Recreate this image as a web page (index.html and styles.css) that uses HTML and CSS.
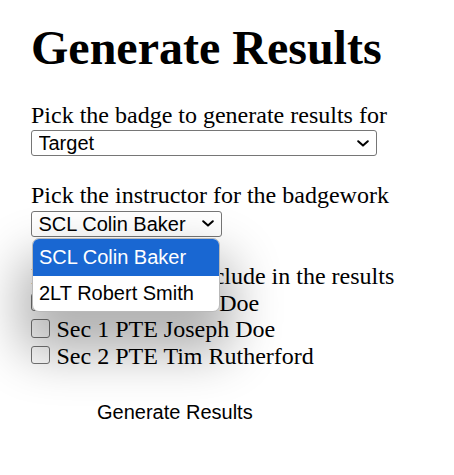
FILE: index.html
```html
<!DOCTYPE html>
<html lang="en">
<head>
<meta charset="utf-8">
<title>Generate Results</title>
<link rel="stylesheet" href="styles.css">
</head>
<body>
<div class="page">
  <h1 class="title">Generate Results</h1>
  <form class="form">
    <div class="field">
      <label class="label" for="badge">Pick the badge to generate results for</label>
      <div class="select-wrap select-wide">
        <select id="badge" class="select"><option>Target</option></select>
        <svg class="chevron" width="12" height="7" viewBox="0 0 12 7"><path d="M1.2 1.2 L6 5.6 L10.8 1.2" fill="none" stroke="#000" stroke-width="2" stroke-linecap="round" stroke-linejoin="round"/></svg>
      </div>
    </div>
    <div class="field">
      <label class="label" for="instructor">Pick the instructor for the badgework</label>
      <div class="select-wrap select-narrow">
        <select id="instructor" class="select"><option>SCL Colin Baker</option><option>2LT Robert Smith</option></select>
        <svg class="chevron" width="12" height="7" viewBox="0 0 12 7"><path d="M1.2 1.2 L6 5.6 L10.8 1.2" fill="none" stroke="#000" stroke-width="2" stroke-linecap="round" stroke-linejoin="round"/></svg>
        <ul class="dropdown">
          <li class="option option-selected">SCL Colin Baker</li>
          <li class="option">2LT Robert Smith</li>
        </ul>
      </div>
    </div>
    <div class="field">
      <div class="label">Pick the users to include in the results</div>
      <label class="cadet"><input type="checkbox" class="check">Sec 1 REC John Doe</label>
      <label class="cadet"><input type="checkbox" class="check">Sec 1 PTE Joseph Doe</label>
      <label class="cadet"><input type="checkbox" class="check">Sec 2 PTE Tim Rutherford</label>
    </div>
    <button type="button" class="submit">Generate Results</button>
  </form>
</div>
</body>
</html>
```
FILE: styles.css
```css
html, body {
  margin: 0;
  padding: 0;
  background: #fff;
}

.page {
  padding: 20px 0 0 31px;
  font-family: "Liberation Serif", "Times New Roman", serif;
  font-size: 24px;
  color: #000;
}

.title {
  margin: 0;
  font-size: 48px;
  line-height: 55px;
  font-weight: 700;
}

.form {
  margin-top: 26.6px;
  display: flex;
  flex-direction: column;
  align-items: flex-start;
  gap: 26.5px;
}

.field {
  display: flex;
  flex-direction: column;
  align-items: flex-start;
}

.label {
  display: block;
  line-height: 26.7px;
}

.select-wrap {
  display: grid;
  grid-template-columns: minmax(0, 1fr);
  position: relative;
  margin-top: 2px;
}

.select-wide { width: 346px; }
.select-narrow { width: 191px; }

.select {
  grid-area: 1 / 1;
  box-sizing: border-box;
  width: 100%;
  min-width: 0;
  appearance: none;
  -webkit-appearance: none;
  height: 25.5px;
  margin: 0;
  padding: 0 26px 0 6.5px;
  border: 1px solid #767676;
  border-radius: 3px;
  background: #fff;
  color: #000;
  font-family: "Liberation Sans", Arial, sans-serif;
  font-size: 20px;
}

.chevron {
  grid-area: 1 / 1;
  justify-self: end;
  align-self: center;
  margin-right: 8.5px;
  pointer-events: none;
}

.dropdown {
  position: absolute;
  top: calc(100% + 1.5px);
  left: 1px;
  width: 188px;
  box-sizing: border-box;
  margin: 0;
  padding: 0;
  list-style: none;
  background: #fff;
  border: 1px solid #b9b9b9;
  border-radius: 7px;
  overflow: hidden;
  box-shadow: 0 30px 50px 12px rgba(0, 0, 0, 0.3);
  z-index: 10;
  font-family: "Liberation Sans", Arial, sans-serif;
  font-size: 20px;
}

.option {
  height: 35.5px;
  line-height: 35.5px;
  padding-left: 6px;
  color: #000;
  white-space: nowrap;
}

.option-selected {
  background: #1967d2;
  color: #fff;
  height: 36.5px;
  line-height: 36.5px;
}

.cadet {
  display: block;
  line-height: 26.5px;
}

.check {
  appearance: none;
  -webkit-appearance: none;
  box-sizing: border-box;
  width: 18.5px;
  height: 18.5px;
  margin: 0 7px -0.5px 0;
  border: 1px solid #767676;
  border-radius: 3px;
  background: #fff;
  vertical-align: baseline;
}

.submit {
  margin: 5px 0 0 66px;
  padding: 0;
  border: none;
  background: transparent;
  color: #000;
  font-family: "Liberation Sans", Arial, sans-serif;
  font-size: 20px;
  line-height: 23px;
}
```
